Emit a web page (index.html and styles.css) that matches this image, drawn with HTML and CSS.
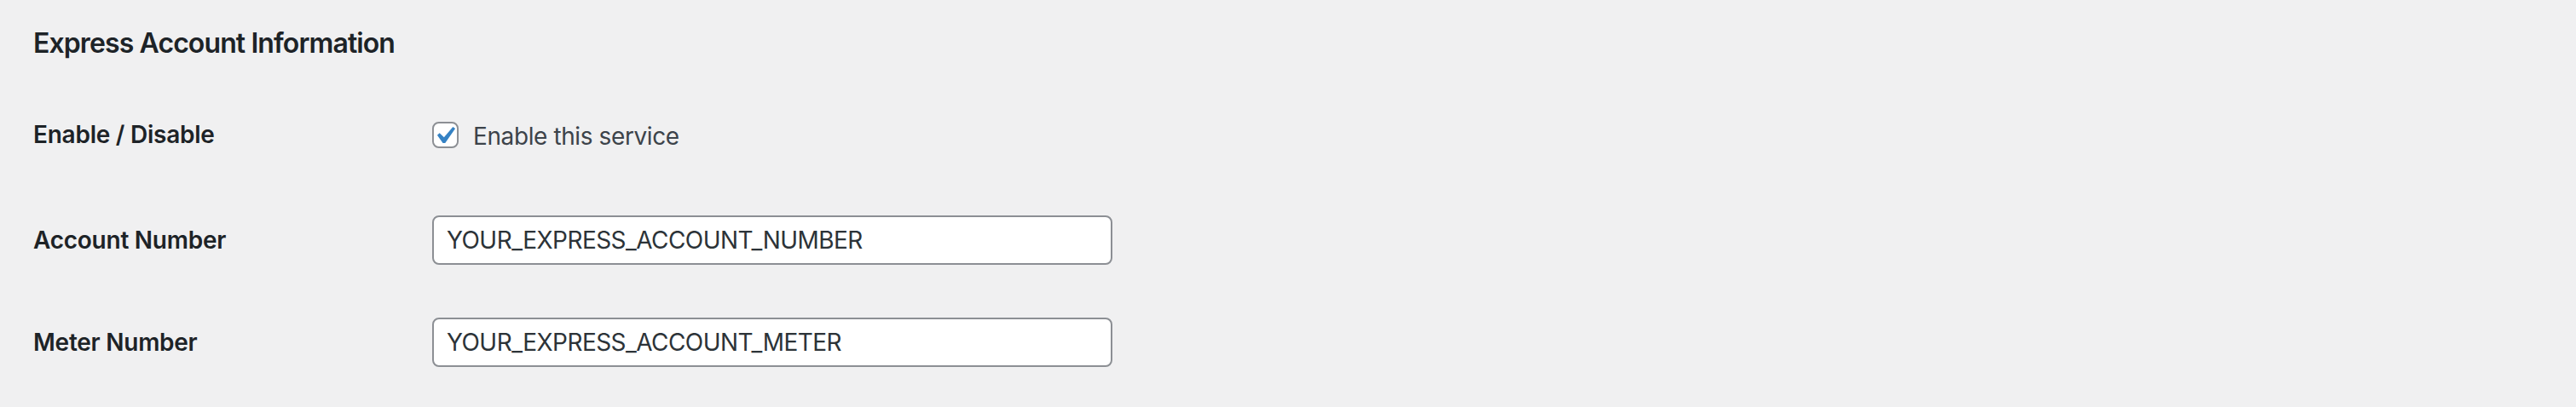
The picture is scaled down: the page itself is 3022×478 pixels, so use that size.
FILE: index.html
```html
<!DOCTYPE html>
<html lang="en">
<head>
<meta charset="utf-8">
<title>Express Account Information</title>
<link rel="stylesheet" href="styles.css">
</head>
<body>
<main class="page">
  <h2 class="section-title">Express Account Information</h2>
  <div class="form">
    <div class="row row-enable">
      <div class="label">Enable / Disable</div>
      <label class="field check-field">
        <svg class="checkbox" width="31" height="31" viewBox="0 0 32 32" aria-hidden="true">
          <rect x="1" y="1" width="30" height="30" rx="7" ry="7" fill="#ffffff" stroke="#8c8f94" stroke-width="2"/>
          <path transform="translate(-6 -4) scale(2.1)" d="M14.83 4.89l1.34.94-5.81 8.38H9.02L5.78 9.67l1.34-1.25 2.57 2.4z" fill="#3582c4"/>
        </svg>
        <span class="check-text">Enable this service</span>
      </label>
    </div>
    <div class="row row-account">
      <div class="label">Account Number</div>
      <div class="field"><input class="text-input" type="text" value="YOUR_EXPRESS_ACCOUNT_NUMBER"></div>
    </div>
    <div class="row row-meter">
      <div class="label">Meter Number</div>
      <div class="field"><input class="text-input" type="text" value="YOUR_EXPRESS_ACCOUNT_METER"></div>
    </div>
  </div>
</main>
</body>
</html>
```

FILE: styles.css
```css
html, body {
  margin: 0;
  padding: 0;
  background: #f0f0f1;
}

body {
  font-family: Inter, "Noto Sans", "Liberation Sans", sans-serif;
  color: #3c434a;
}

.page {
  padding: 29px 0 0 39px;
}

.section-title {
  margin: 0;
  font-size: 32px;
  line-height: 44px;
  font-weight: 600;
  letter-spacing: -0.9px;
  color: #1d2327;
}

.form {
  display: flex;
  flex-direction: column;
}

.row {
  display: grid;
  grid-template-columns: 468px 798px;
  align-items: center;
  height: 58px;
}

.row-enable {
  margin-top: 56px;
}

.row-account {
  margin-top: 66px;
}

.row-meter {
  margin-top: 62px;
}

.label {
  font-size: 28px;
  line-height: 40px;
  font-weight: 600;
  letter-spacing: -0.25px;
  color: #1d2327;
}

.check-field {
  display: flex;
  align-items: center;
  gap: 17px;
}

.checkbox {
  display: block;
  flex: none;
}

.check-text {
  padding-top: 3px;
  font-size: 28px;
  line-height: 40px;
  letter-spacing: -0.4px;
  color: #3c434a;
}

.text-input {
  box-sizing: border-box;
  display: block;
  width: 798px;
  height: 58px;
  margin: 0;
  padding: 0 16px 0 15px;
  border: 2px solid #8c8f94;
  border-radius: 8px;
  background: #ffffff;
  font-family: Inter, "Noto Sans", "Liberation Sans", sans-serif;
  font-size: 28px;
  letter-spacing: -0.55px;
  color: #2c3338;
  outline: none;
}
```
